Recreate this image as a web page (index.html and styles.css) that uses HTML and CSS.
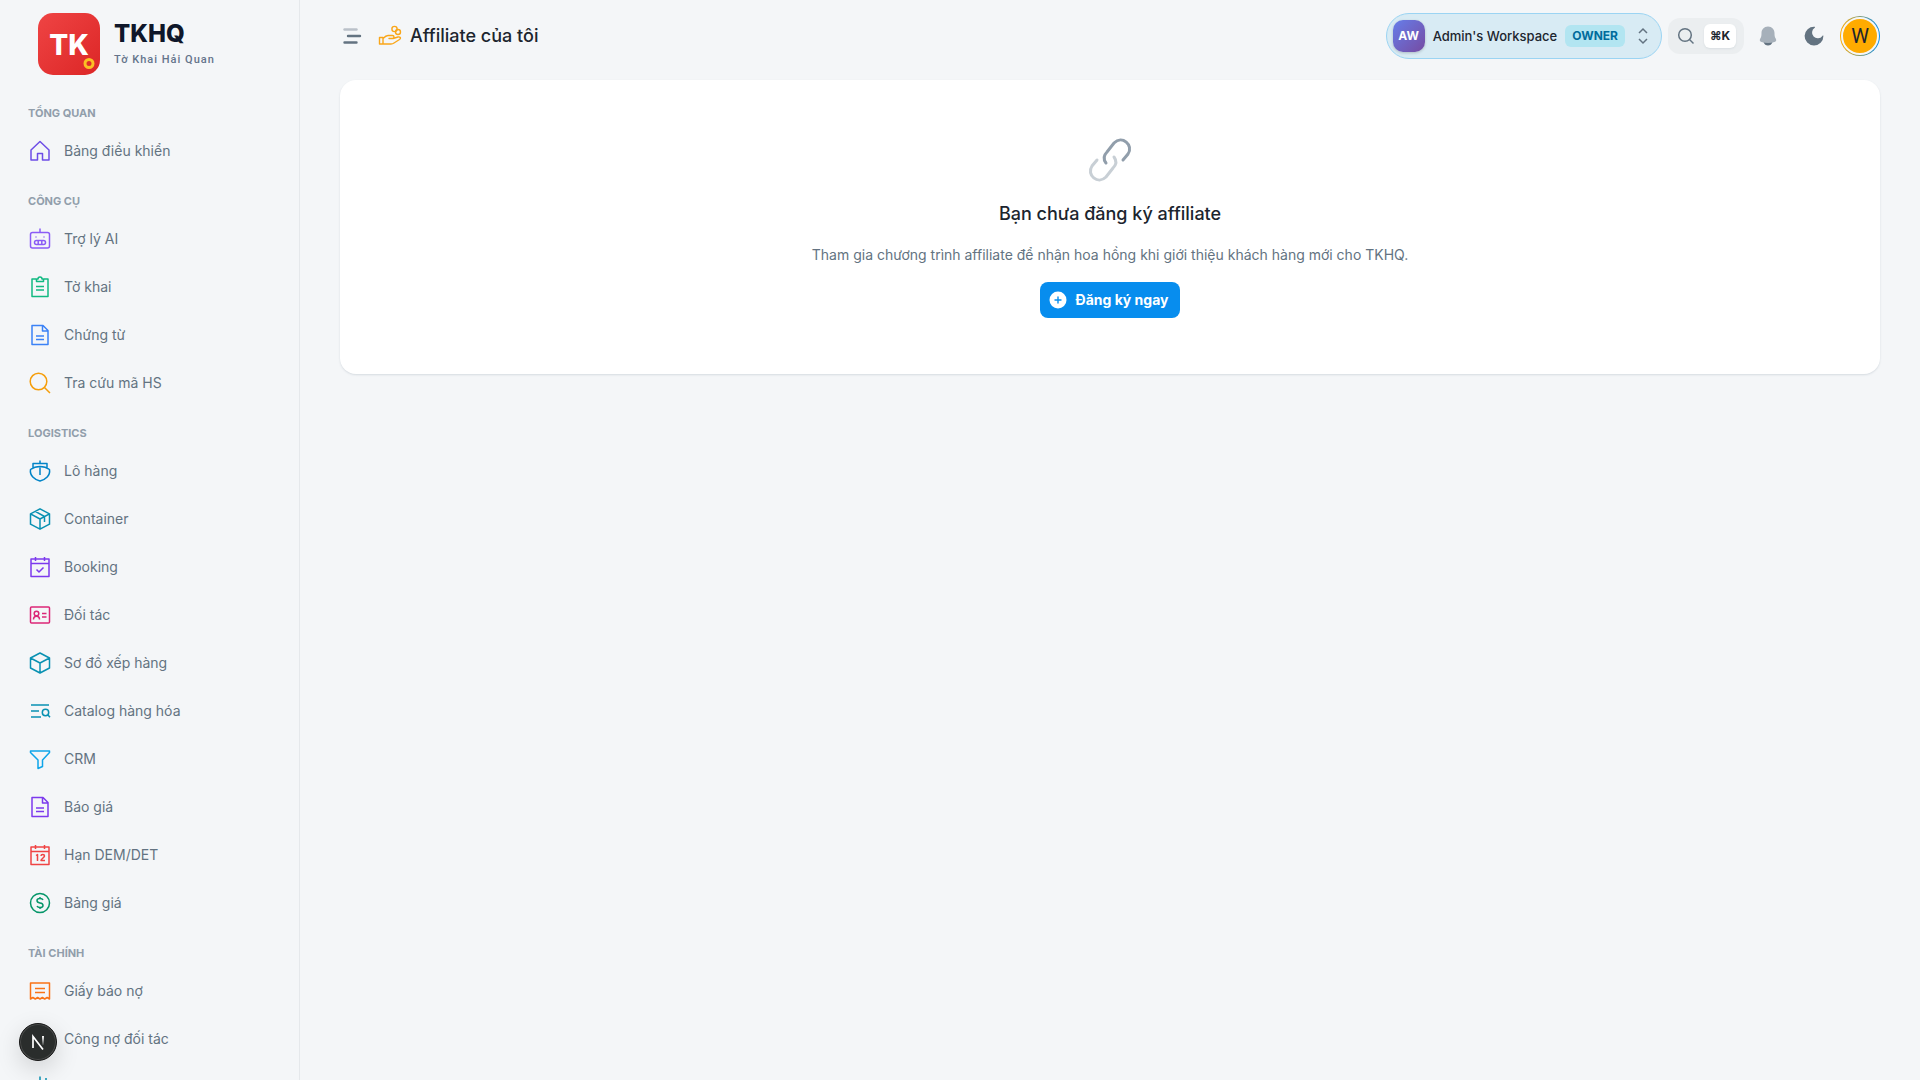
FILE: index.html
```html
<!DOCTYPE html>
<html lang="vi">
<head>
    <meta charset="UTF-8">
    <meta name="viewport" content="width=device-width, initial-scale=1.0">
    <title>Affiliate của tôi</title>
    <link rel="stylesheet" href="styles.css">
</head>
<body>
<aside class="sidebar">
    <a href="#" class="brand">
        <svg class="brand-logo" viewBox="0 0 64 64">
            <defs>
                <linearGradient id="logoFill" x1="0" y1="0" x2="1" y2="1">
                    <stop offset="0" stop-color="#ef4444"/>
                    <stop offset="1" stop-color="#dc2626"/>
                </linearGradient>
            </defs>
            <rect x="1" y="0" width="62" height="62" rx="15" fill="url(#logoFill)"/>
            <text class="logo-text" x="32" y="42" text-anchor="middle">TK</text>
            <circle cx="52" cy="50.500" r="4" fill="none" stroke="#fbbf24" stroke-width="3"/>
        </svg>
        <span class="brand-text">
            <span class="brand-name">TKHQ</span>
            <span class="brand-sub">Tờ Khai Hải Quan</span>
        </span>
    </a>
    <nav class="menu">
        <h3>Tổng quan</h3>
        <ul>
            <li><a href="#"><svg class="icon violet" viewBox="0 0 24 24"><path d="M3 21V11l9-8.500 9 8.500v10h-6.500v-6.500h-5V21z"/></svg>Bảng điều khiển</a></li>
        </ul>
        <h3>Công cụ</h3>
        <ul>
            <li><a href="#"><svg class="icon lilac" viewBox="0 0 24 24"><rect x="2.500" y="5.500" width="19" height="15.500" rx="2"/><path d="M12 1.500v4M7.500 10h1M15.500 10h1"/><rect x="6.500" y="13.500" width="11" height="4" rx="2"/><path d="M10.200 13.500v4M13.800 13.500v4"/></svg>Trợ lý AI</a></li>
            <li><a href="#"><svg class="icon green" viewBox="0 0 24 24"><path d="M8 4H4v17.500h16V4h-4"/><path d="M8.500 6.500h7V4H14a2 2 0 0 0-4 0H8.500zM8 11.500h8M8 15h8"/></svg>Tờ khai</a></li>
            <li><a href="#"><svg class="icon blue" viewBox="0 0 24 24"><path d="M4 2.500h11l5 5V21.500H4zM14.500 2.500V8H20M8 13h8M8 16.500h8"/></svg>Chứng từ</a></li>
            <li><a href="#"><svg class="icon amber" viewBox="0 0 24 24"><circle cx="10.500" cy="10.500" r="8.300"/><path d="M16.500 16.500l5.500 5.500"/></svg>Tra cứu mã HS</a></li>
        </ul>
        <h3>Logistics</h3>
        <ul>
            <li><a href="#"><svg class="icon sky" viewBox="0 0 24 24"><path d="M2.500 10.500C8 6.500 16 6.500 21.500 10.500c1 6-4 10-9.500 11.500C6.500 20.500 1.500 16.500 2.500 10.500zM5 9V4.500h14V9M12 1.500v3M12 8.500V16"/></svg>Lô hàng</a></li>
            <li><a href="#"><svg class="icon teal" viewBox="0 0 24 24"><path d="M12 1.800l9.500 5v10.400L12 22.200l-9.500-5V6.800zM2.500 6.800L12 12l9.500-5.200M12 12v10.200M7.300 4.300l9.200 5.200v5.500"/></svg>Container</a></li>
            <li><a href="#"><svg class="icon purple" viewBox="0 0 24 24"><path d="M3 4h18v17.500H3zM3 8.500h18M7.500 2v4M16.500 2v4M8.500 14.500l2.500 2.500 4.500-4.500"/></svg>Booking</a></li>
            <li><a href="#"><svg class="icon pink" viewBox="0 0 24 24"><rect x="2.500" y="4" width="19" height="16" rx="1"/><circle cx="8.500" cy="10.500" r="2.300"/><path d="M5.500 16.500c0-4.500 6-4.500 6 0M14 10.500h4.500M14 14h4.500"/></svg>Đối tác</a></li>
            <li><a href="#"><svg class="icon teal" viewBox="0 0 24 24"><path d="M12 2l9.500 5v10L12 22l-9.500-5V7zM2.500 7L12 12l9.500-5M12 12v10"/></svg>Sơ đồ xếp hàng</a></li>
            <li><a href="#"><svg class="icon teal" viewBox="0 0 24 24"><path d="M3 6h18M3 12h8M3 18h10"/><circle cx="17.500" cy="13.500" r="3.200"/><path d="M20 16l2 2.200"/></svg>Catalog hàng hóa</a></li>
            <li><a href="#"><svg class="icon azure" viewBox="0 0 24 24"><path d="M2.500 4h19v1.500L14.500 13v6.500L10 21.500V13L2.500 5.500z"/></svg>CRM</a></li>
            <li><a href="#"><svg class="icon purple" viewBox="0 0 24 24"><path d="M4 2.500h11l5 5V21.500H4zM14.500 2.500V8H20M8 13h8M8 16.500h8"/></svg>Báo giá</a></li>
            <li><a href="#"><svg class="icon red" viewBox="0 0 24 24"><path d="M3 4h18v17.500H3zM3 8.500h18M7.500 2v4M16.500 2v4M8 12.500l1.500-1v6.500M13 13c0-2 3.500-2 3.500 0 0 1.500-3.500 3-3.500 4.500h4"/></svg>Hạn DEM/DET</a></li>
            <li><a href="#"><svg class="icon emerald" viewBox="0 0 24 24"><circle cx="12" cy="12" r="9.500"/><path d="M15 9c-.5-1.200-1.500-1.500-3-1.500-4 0-4 4 0 4.500s4 4.500 0 4.500c-1.500 0-2.500-.5-3-1.500M12 6v1.500M12 16.500V18"/></svg>Bảng giá</a></li>
        </ul>
        <h3>Tài chính</h3>
        <ul>
            <li><a href="#"><svg class="icon orange" viewBox="0 0 24 24"><path d="M2.500 20V4h19v16l-2.400-1.500L16.700 20l-2.300-1.500L12 20l-2.400-1.500L7.300 20l-2.400-1.500zM7 9.500h10M7 13.500h10"/></svg>Giấy báo nợ</a></li>
            <li><a href="#"><svg class="icon red" viewBox="0 0 24 24"></svg>Công nợ đối tác</a></li>
            <li><a href="#" aria-label="Thu chi"><svg class="icon teal" viewBox="0 0 24 24"><path d="M12 1.500v21M18 3v18"/></svg></a></li>
        </ul>
    </nav>
</aside>

<div class="page">
    <header class="topbar">
        <button class="icon-btn menu-btn" type="button" aria-label="Menu">
            <svg viewBox="0 0 24 24"><g fill="none" stroke="#637381" stroke-width="2.400" stroke-linecap="round"><path d="M4.500 5.500h12" opacity=".4"/><path d="M8 12h12M4.500 18.500h12"/></g></svg>
        </button>
        <h1>
            <svg class="title-icon" viewBox="0 0 24 24"><circle cx="16.500" cy="5" r="2.600"/><circle cx="20" cy="8" r="2.500"/><path d="M1.500 13.500h3.500v6.500H1.500zM5 14.500c2-2 3.500-3 5-3h4.500c2 0 2 3 0 3H11h4l5-1.500c2-.5 3.500 1 1.500 2.500L16 19c-1 .8-2 1-3 1H5"/></svg>
            Affiliate của tôi
        </h1>
        <div class="tools">
            <button class="workspace" type="button">
                <span class="ws-avatar">AW</span>
                <span class="ws-name">Admin's Workspace</span>
                <span class="ws-role">OWNER</span>
                <svg class="ws-arrows" viewBox="0 0 20 20"><path d="M6 7l4-4 4 4M6 13l4 4 4-4"/></svg>
            </button>
            <button class="search" type="button" aria-label="Tìm kiếm">
                <svg viewBox="0 0 20 20"><circle cx="9" cy="9" r="6.300"/><path d="M13.500 13.500l4 4"/></svg>
                <kbd>⌘K</kbd>
            </button>
            <button class="icon-btn" type="button" aria-label="Thông báo">
                <svg viewBox="0 0 24 24"><path fill="#637381" d="M7.500 18h9c-.7 2.500-2.500 3.500-4.500 3.500S8.200 20.500 7.500 18z"/><path fill="#a6b0ba" d="M12 2.500c-4 0-6.500 3-6.500 6.500 0 3-.3 4-1.200 5.500-1 1.800-.5 3 1.200 3.500 4 1.200 9 1.200 13 0 1.700-.5 2.200-1.700 1.200-3.500-.9-1.500-1.200-2.500-1.200-5.500 0-3.500-2.500-6.500-6.500-6.500z"/></svg>
            </button>
            <button class="icon-btn" type="button" aria-label="Giao diện tối">
                <svg viewBox="0 0 24 24"><path fill="#637381" d="M12.500 2.700A9.400 9.400 0 1 0 21.400 12c0-.5-.7-.6-1-.1A5.700 5.700 0 1 1 12.700 3.800c.5-.4.400-1.100-.2-1.100z"/></svg>
            </button>
            <button class="avatar" type="button"><span>W</span></button>
        </div>
    </header>

    <main class="content">
        <section class="card">
            <svg class="link-icon" viewBox="0 0 48 48">
                <path stroke="#919eab" d="M20 27c-3-4-2-8 1-11l7-9c8-8 20 2 14 11l-5 6"/>
                <path stroke="#c8cfd5" d="M11 24l-5 6c-6 9 6 19 14 11l7-9c3-3 4-7 1-11"/>
            </svg>
            <h2>Bạn chưa đăng ký affiliate</h2>
            <p>Tham gia chương trình affiliate để nhận hoa hồng khi giới thiệu khách hàng mới cho TKHQ.</p>
            <button class="register-btn" type="button">
                <svg viewBox="0 0 20 20"><circle cx="10" cy="10" r="8.500" fill="#fff"/><path d="M10 7v6M7 10h6" stroke="#078dee" stroke-width="1.400" stroke-linecap="round"/></svg>
                Đăng ký ngay
            </button>
        </section>
    </main>
</div>

<button class="dev-badge" type="button" aria-label="Dev tools">
    <svg viewBox="0 0 36 36">
        <defs>
            <linearGradient id="badgeFade" x1="0" y1="0" x2="0" y2="1">
                <stop offset="0" stop-color="#fff"/>
                <stop offset="1" stop-color="#fff" stop-opacity=".1"/>
            </linearGradient>
        </defs>
        <path d="M13 24V12.500L23 25.500" fill="none" stroke="#fff" stroke-width="1.700"/>
        <rect x="22" y="12" width="2" height="9" fill="url(#badgeFade)"/>
    </svg>
</button>
</body>
</html>
```
FILE: styles.css
```css
* { margin: 0; padding: 0; box-sizing: border-box; }
body {
    display: flex;
    height: 100vh;
    overflow: hidden;
    background-color: #f4f6f8;
    color: #1c252e;
    font-family: Inter, "Liberation Sans", sans-serif;
    font-size: 14px;
    line-height: 22px;
}
a { color: inherit; text-decoration: none; }
ul { list-style: none; }
button { font: inherit; color: inherit; border: none; background: none; cursor: pointer; }
svg { display: block; flex-shrink: 0; }

/* sidebar */
.sidebar {
    width: 300px;
    flex-shrink: 0;
    height: 100vh;
    overflow: hidden;
    border-right: 1px solid #e5e8eb;
}
.brand { display: flex; align-items: center; gap: 13px; padding: 13px 37px 10px; }
.brand-logo { width: 64px; height: 64px; }
.logo-text { font-size: 28px; font-weight: 800; fill: #fff; }
.brand-text { display: flex; flex-direction: column; }
.brand-name { font-size: 24px; font-weight: 800; line-height: 30px; color: #0f172a; }
.brand-sub {
    font-family: Roboto, sans-serif;
    font-size: 11px;
    font-weight: 500;
    line-height: 22px;
    letter-spacing: 1px;
    color: #64748b;
}
.menu { padding: 0 28px; }
.menu h3 {
    padding: 18px 0 6px;
    font-size: 11px;
    line-height: 16px;
    font-weight: 700;
    text-transform: uppercase;
    color: #919eab;
}
.menu a {
    display: flex;
    align-items: center;
    gap: 12px;
    height: 48px;
    color: #637381;
    white-space: nowrap;
}
.icon { width: 24px; height: 24px; fill: none; stroke: currentColor; stroke-width: 1.5; stroke-linejoin: round; }
.violet { color: #6d4de6; }
.lilac { color: #8b5cf6; }
.green { color: #10b981; }
.blue { color: #3b82f6; }
.amber { color: #f59e0b; }
.sky { color: #0284c7; }
.teal { color: #0891b2; }
.purple { color: #7c3aed; }
.pink { color: #db2777; }
.azure { color: #0ea5e9; }
.red { color: #ef4444; }
.emerald { color: #059669; }
.orange { color: #f97316; }

/* top bar */
.page { flex: 1; min-width: 0; }
.topbar { display: flex; align-items: center; height: 72px; padding: 0 40px; }
.icon-btn svg { width: 24px; height: 24px; }
.menu-btn { margin-right: 14px; }
h1 { display: flex; align-items: center; gap: 8px; font-size: 18px; line-height: 28px; font-weight: 500; }
.title-icon { width: 24px; height: 24px; fill: none; stroke: #f9a61a; stroke-width: 1.4; stroke-linejoin: round; }
.tools { display: flex; align-items: center; margin-left: auto; }
.workspace {
    display: flex;
    align-items: center;
    gap: 8px;
    height: 46px;
    margin-right: 6px;
    padding: 0 8px 0 6px;
    border: 1px solid #9bd4f3;
    border-radius: 23px;
    background-color: #d8ebf4;
}
.ws-avatar {
    width: 32px;
    height: 32px;
    border-radius: 10px;
    background: linear-gradient(135deg, #667eea, #764ba2);
    box-shadow: 0 1px 3px rgba(0,0,0,0.2);
    color: #fff;
    font-size: 12px;
    font-weight: 700;
    line-height: 32px;
}
.ws-name { font-size: 13px; font-weight: 500; }
.ws-role {
    padding: 0 7px;
    border-radius: 6px;
    background-color: #b2e5f1;
    color: #006c9c;
    font-size: 12px;
    font-weight: 700;
}
.ws-arrows { width: 20px; height: 20px; fill: none; stroke: #637381; stroke-width: 1.5; }
.search {
    display: flex;
    align-items: center;
    gap: 8px;
    height: 36px;
    margin-right: 4px;
    padding: 0 8px;
    border-radius: 12px;
    background-color: #ebeef0;
}
.search svg { width: 20px; height: 20px; fill: none; stroke: #637381; stroke-width: 1.5; }
kbd {
    width: 32px;
    border-radius: 6px;
    background-color: #fff;
    box-shadow: 0 1px 2px rgba(145,158,171,0.2);
    font-family: inherit;
    font-size: 12px;
    font-weight: 700;
    line-height: 24px;
}
.tools .icon-btn { padding: 8px; margin-right: 6px; }
.avatar { width: 40px; height: 40px; padding: 1px; border-radius: 50%; background: linear-gradient(90deg, #ffab00, #078dee); }
.avatar span {
    display: block;
    border: 2px solid #f4f6f8;
    border-radius: 50%;
    background-color: #ffab00;
    font-family: Roboto, sans-serif;
    font-size: 20px;
    line-height: 34px;
}

/* card */
.content { padding: 8px 40px 40px; }
.card {
    display: flex;
    flex-direction: column;
    align-items: center;
    gap: 16px;
    padding: 56px 24px;
    border-radius: 16px;
    background-color: #fff;
    box-shadow: 0 1px 2px rgba(145,158,171,0.3);
}
.link-icon { width: 48px; height: 48px; fill: none; stroke-width: 3; stroke-linecap: round; }
h2 { font-size: 18px; line-height: 28px; font-weight: 500; }
.card p { color: #637381; }
.register-btn {
    display: flex;
    align-items: center;
    gap: 8px;
    height: 36px;
    padding: 0 12px 0 8px;
    border-radius: 8px;
    background-color: #078dee;
    color: #fff;
    font-weight: 700;
}
.register-btn svg { width: 20px; height: 20px; }

.dev-badge {
    position: fixed;
    left: 19px;
    bottom: 19px;
    width: 38px;
    height: 38px;
    border: 1px solid #171717;
    border-radius: 50%;
    background-color: #2a2d2c;
    box-shadow: inset 0 0 0 1px #4a4c4b, 0 8px 24px rgba(0,0,0,0.15);
}
```
